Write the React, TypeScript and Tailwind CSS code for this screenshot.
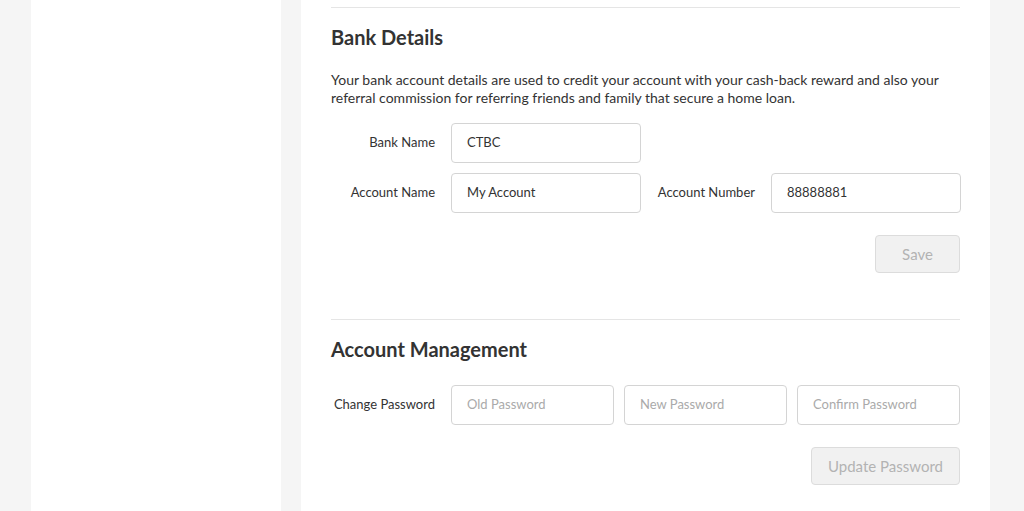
import React from 'react';

const font = { fontFamily: 'Lato, "Open Sans", sans-serif' };

const Field = ({ label, value, placeholder }: { label: string; value?: string; placeholder?: string }) => (
    <div className="flex items-center">
        <label className="w-[120px] shrink-0 pr-4 text-right text-[13px] text-[#333]">{label}</label>
        <input
            readOnly
            defaultValue={value}
            placeholder={placeholder}
            className="h-10 w-[190px] rounded border border-[#d4d4d4] bg-white px-[15px] pb-[2px] text-[13px] text-[#333] outline-none placeholder:text-[#aaa]"
        />
    </div>
);

const PassInput = ({ placeholder }: { placeholder: string }) => (
    <input
        readOnly
        placeholder={placeholder}
        className="h-10 w-[163px] rounded border border-[#d4d4d4] bg-white px-[15px] pb-[2px] text-[13px] text-[#333] outline-none placeholder:text-[#aaa]"
    />
);

const DisabledButton = ({ children, className = '' }: { children: React.ReactNode; className?: string }) => (
    <button
        disabled
        className={`h-[38px] rounded border border-[#dcdcdc] bg-[#f1f1f1] px-4 text-[15px] text-[#b3b3b3] ${className}`}
    >
        {children}
    </button>
);

export default function App() {
    return (
        <div className="flex h-[511px] gap-5 overflow-hidden bg-[#f5f5f5] pl-[31px]" style={font}>
            {/* Sidebar */}
            <aside className="w-[250px] shrink-0 bg-white"></aside>

            {/* Main panel */}
            <main className="w-[689px] shrink-0 bg-white px-[30px] pt-[7px]">
                {/* Bank Details */}
                <section className="border-t border-[#e5e5e5]">
                    <h2 className="mt-[17px] text-[20px] leading-6 font-bold text-[#333]">Bank Details</h2>
                    <p className="mt-[22px] text-[14px] leading-[18px] text-[#333]">
                        Your bank account details are used to credit your account with your cash-back reward and also your
                        referral commission for referring friends and family that secure a home loan.
                    </p>

                    <div className="mt-4 flex flex-col gap-[10px]">
                        <Field label="Bank Name" value="CTBC" />
                        <div className="flex gap-[10px]">
                            <Field label="Account Name" value="My Account" />
                            <Field label="Account Number" value="88888881" />
                        </div>
                    </div>

                    <div className="mt-[22px] flex justify-end">
                        <DisabledButton className="w-[85px]">Save</DisabledButton>
                    </div>
                </section>

                {/* Account Management */}
                <section className="mt-[46px] border-t border-[#e5e5e5]">
                    <h2 className="mt-[17px] text-[20px] leading-6 font-bold text-[#333]">Account Management</h2>

                    <div className="mt-6 flex items-center">
                        <label className="w-[120px] shrink-0 pr-4 text-right text-[13px] text-[#333]">Change Password</label>
                        <div className="flex gap-[10px]">
                            <PassInput placeholder="Old Password" />
                            <PassInput placeholder="New Password" />
                            <PassInput placeholder="Confirm Password" />
                        </div>
                    </div>

                    <div className="mt-[22px] flex justify-end">
                        <DisabledButton>Update Password</DisabledButton>
                    </div>
                </section>
            </main>
        </div>
    );
}
